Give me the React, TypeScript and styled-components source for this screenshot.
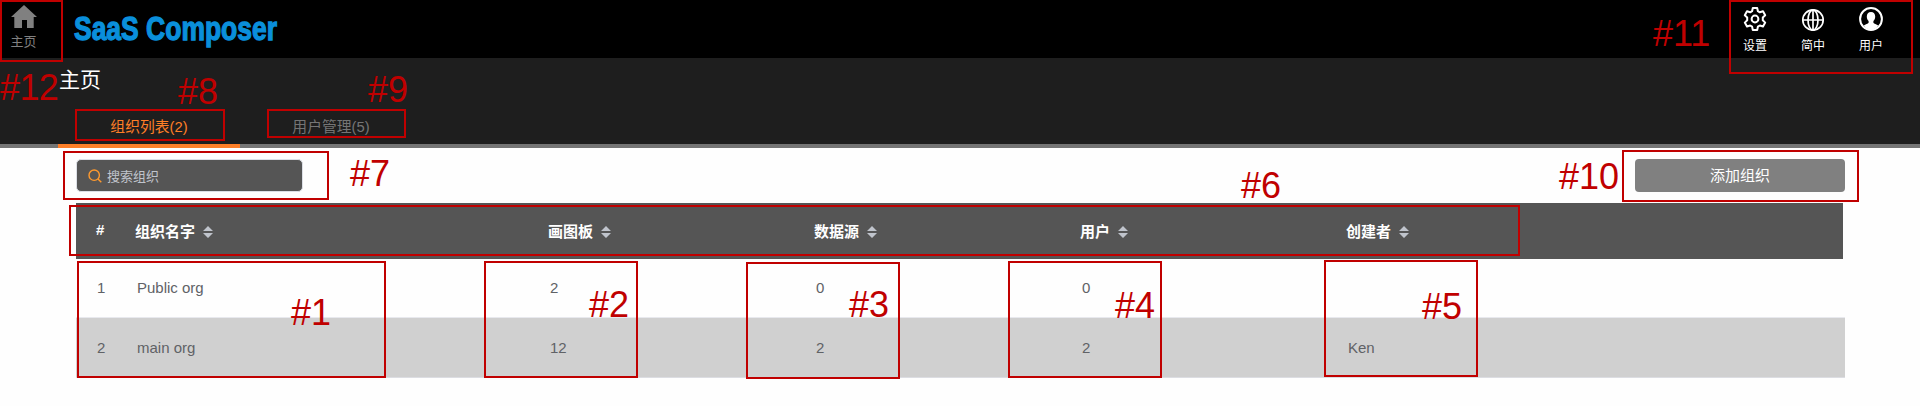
import React from "react";
import styled, { createGlobalStyle } from "styled-components";

const sans = `"Liberation Sans", Arial, "Noto Sans CJK SC", sans-serif`;

const Global = createGlobalStyle`
  * { box-sizing: border-box; }
  body { margin: 0; background: #fefefe; font-family: ${sans}; }
`;

const Page = styled.div`
  position: relative;
  width: 1920px;
  height: 406px;
  overflow: hidden;
  background: #fefefe;
`;

const TopBar = styled.header`
  display: flex;
  height: 58px;
  background: #000;
`;

const HomeLink = styled.a`
  display: flex;
  flex-direction: column;
  align-items: center;
  width: 47px;
  padding-top: 5px;
  color: #808080;
  font-size: 13px;
  line-height: 16px;
  gap: 6px;
`;

const Logo = styled.svg`
  margin-left: 26px;
  flex: none;
  overflow: visible;
`;

const TopActions = styled.nav`
  display: flex;
  margin-left: auto;
  padding: 7px 20px 0 0;
`;

const TopAction = styled.a`
  display: flex;
  flex-direction: column;
  align-items: center;
  width: 58px;
  gap: 7px;
  color: #fff;
  font-size: 12px;
  line-height: 16px;
`;

const SubHeader = styled.section`
  display: flex;
  flex-direction: column;
  justify-content: space-between;
  height: 90px;
  background: #1e1e1e;
`;

const Title = styled.h1`
  margin: 0;
  padding: 8px 0 0 59px;
  color: #fff;
  font-size: 21px;
  font-weight: 400;
  line-height: 28px;
`;

const Tabs = styled.div`
  display: flex;
  padding-left: 58px;
  background: linear-gradient(#757575, #757575) bottom / 100% 4px no-repeat;
`;

const Tab = styled.div<{ $active?: boolean }>`
  width: 182px;
  height: 42px;
  padding-top: 9px;
  text-align: center;
  font-size: 14.8px;
  line-height: 24px;
  color: ${(p) => (p.$active ? "#ff7f27" : "#757575")};
  border-bottom: 4px solid ${(p) => (p.$active ? "#ff7f27" : "transparent")};
`;

const Toolbar = styled.div`
  display: flex;
  justify-content: space-between;
  align-items: flex-start;
  height: 55px;
  padding: 11px 75px 0 76px;
`;

const SearchBox = styled.div`
  display: flex;
  align-items: center;
  gap: 5px;
  width: 227px;
  height: 33px;
  padding-left: 11px;
  border: 1px solid #dcdfe6;
  border-radius: 5px;
  background: #555;
  color: #c0c4cc;
  font-size: 13px;
`;

const AddButton = styled.button`
  width: 210px;
  height: 33px;
  padding: 0;
  border: 0;
  border-radius: 4px;
  background: #808080;
  color: #fff;
  font: 15px/33px ${sans};
`;

const Table = styled.div`
  width: 1769px;
  margin-left: 76px;
`;

const columns = "39px 413px 266px 266px 266px 1fr";

const HeadRow = styled.div`
  display: grid;
  grid-template-columns: ${columns};
  align-items: center;
  width: 1767px;
  height: 56px;
  padding-left: 20px;
  background: #555;
  color: #fff;
  font-size: 15px;
  font-weight: 700;
`;

const HeadCell = styled.div`
  display: flex;
  align-items: center;
  gap: 8px;
  padding-top: 1px;
  line-height: 20px;
`;

const HashCell = styled(HeadCell)`
  padding-bottom: 4px;
`;

const BodyRow = styled.div<{ $striped?: boolean }>`
  display: grid;
  grid-template-columns: ${columns};
  align-items: center;
  height: ${(p) => (p.$striped ? 60 : 59)}px;
  padding-left: 20px;
  border-bottom: 1px solid ${(p) => (p.$striped ? "#dcdde2" : "#e8e9ee")};
  background: ${(p) => (p.$striped ? "#d0d0d0" : "transparent")};
  color: #606266;
  font-size: 15px;
`;

const BodyCell = styled.div<{ $shift: number }>`
  padding-left: ${(p) => p.$shift}px;
  line-height: 20px;
`;

const Frame = styled.div<{ $x: number; $y: number; $w: number; $h: number }>`
  position: absolute;
  left: ${(p) => p.$x}px;
  top: ${(p) => p.$y}px;
  width: ${(p) => p.$w}px;
  height: ${(p) => p.$h}px;
  border: 2px solid #c00000;
`;

const Callout = styled.div<{ $x: number; $y: number; $tight?: boolean }>`
  position: absolute;
  left: ${(p) => p.$x}px;
  top: ${(p) => p.$y}px;
  color: #c00000;
  font-size: 36px;
  line-height: 42px;
  letter-spacing: ${(p) => (p.$tight ? "-0.6px" : "normal")};
  white-space: nowrap;
`;

const HomeIcon = () => (
  <svg width="26" height="23" viewBox="0 0 26 23" fill="#808080">
    <path d="M13 0 26 12h-3.300v11h-6.700v-8h-5v8H3.300V12H0Z" />
  </svg>
);

const GearIcon = () => (
  <svg width="24" height="24" viewBox="0 0 24 24" fill="none" stroke="#fff" strokeWidth="2" strokeLinejoin="round">
    <path d="M9.8 1h4.4l.7 3.2 1.9 1.1 3.2-1 2.2 3.9-2.4 2.2v2.9l2.4 2.3-2.2 3.900-3.200-1-1.900 1.100-.7 3.400H9.800l-.7-3.400-1.900-1.100-3.200 1-2.200-3.900 2.400-2.300v-2.900L1.800 8.200 4 4.300l3.200 1 1.900-1.100Z" />
    <circle cx="12" cy="12" r="3.400" />
  </svg>
);

const GlobeIcon = () => (
  <svg width="24" height="24" viewBox="0 0 24 24" fill="none" stroke="#fff" strokeWidth="1.7">
    <circle cx="12" cy="13" r="10.2" />
    <ellipse cx="12" cy="13" rx="5" ry="10.2" />
    <path d="M12 2.8v20.4M1.8 13h20.4" />
  </svg>
);

const UserIcon = () => (
  <svg width="24" height="24" viewBox="0 0 24 24">
    <circle cx="12" cy="12" r="10.9" fill="none" stroke="#fff" strokeWidth="2" />
    <path
      fill="#fff"
      d="M12 5c2.700 0 4.200 1.900 4.200 4.500 0 2-.8 3.500-1.800 4.500v1.800c.5 1 3.200 1.500 4.800 2.700C17.600 21 15 22.500 12 22.500S6.400 21 4.800 18.500c1.600-1.200 4.300-1.700 4.800-2.700V14c-1-1-1.800-2.500-1.800-4.500C7.800 6.900 9.300 5 12 5Z"
    />
  </svg>
);

const SearchIcon = () => (
  <svg width="14" height="14" viewBox="0 0 14 14" fill="none" stroke="#ff9a2e" strokeWidth="1.4">
    <circle cx="6.200" cy="6.200" r="5.200" />
    <path d="m10 10 3.300 3.300" />
  </svg>
);

const SortIcon = () => (
  <svg width="10" height="12" viewBox="0 0 10 12" fill="#c0c4cc">
    <path d="M5 0l5 5H0zM0 7h10l-5 5z" />
  </svg>
);

const headings = ["组织名字", "画图板", "数据源", "用户", "创建者"];
const rows = [
  ["1", "Public org", "2", "0", "0", ""],
  ["2", "main org", "12", "2", "2", "Ken"],
];
const shifts = [1, 2, 2, 2, 2, 2];

const frames = [
  [0, 0, 63, 62],
  [75, 109, 150, 32],
  [267, 109, 139, 29],
  [63, 151, 266, 49],
  [69, 205, 1451, 51],
  [77, 261, 309, 117],
  [484, 261, 154, 117],
  [746, 262, 154, 117],
  [1008, 261, 154, 117],
  [1324, 260, 154, 117],
  [1622, 150, 237, 52],
  [1729, 0, 184, 74],
];

const callouts: [string, number, number][] = [
  ["#12", 0, 67],
  ["#8", 178, 71],
  ["#9", 368, 69],
  ["#7", 350, 153],
  ["#6", 1241, 165],
  ["#1", 291, 292],
  ["#2", 589, 284],
  ["#3", 849, 284],
  ["#4", 1115, 285],
  ["#5", 1422, 286],
  ["#10", 1559, 156],
  ["#11", 1653, 13],
];

export default function App() {
  return (
    <Page>
      <Global />
      <TopBar>
        <HomeLink>
          <HomeIcon />
          主页
        </HomeLink>
        <Logo width="210" height="58">
          <text
            x="1"
            y="39.500"
            textLength="203"
            lengthAdjust="spacingAndGlyphs"
            fill="#0a8fdb"
            stroke="#0a8fdb"
            strokeWidth="1.3"
            fontFamily="'Liberation Sans Narrow', 'Liberation Sans', sans-serif"
            fontWeight="700"
            fontSize="33"
          >
            SaaS Composer
          </text>
        </Logo>
        <TopActions>
          <TopAction><GearIcon />设置</TopAction>
          <TopAction><GlobeIcon />简中</TopAction>
          <TopAction><UserIcon />用户</TopAction>
        </TopActions>
      </TopBar>
      <SubHeader>
        <Title>主页</Title>
        <Tabs>
          <Tab $active>组织列表(2)</Tab>
          <Tab>用户管理(5)</Tab>
        </Tabs>
      </SubHeader>
      <Toolbar>
        <SearchBox>
          <SearchIcon />
          搜索组织
        </SearchBox>
        <AddButton>添加组织</AddButton>
      </Toolbar>
      <Table>
        <HeadRow>
          <HashCell>#</HashCell>
          {headings.map((h) => (
            <HeadCell key={h}>
              {h}
              <SortIcon />
            </HeadCell>
          ))}
        </HeadRow>
        {rows.map((row, r) => (
          <BodyRow key={row[0]} $striped={r % 2 === 1}>
            {row.map((cell, c) => (
              <BodyCell key={c} $shift={shifts[c]}>{cell}</BodyCell>
            ))}
          </BodyRow>
        ))}
      </Table>
      {frames.map(([x, y, w, h]) => (
        <Frame key={`${x}-${y}`} $x={x} $y={y} $w={w} $h={h} />
      ))}
      {callouts.map(([label, x, y]) => (
        <Callout key={label} $x={x} $y={y} $tight={label === "#12"}>{label}</Callout>
      ))}
    </Page>
  );
}
